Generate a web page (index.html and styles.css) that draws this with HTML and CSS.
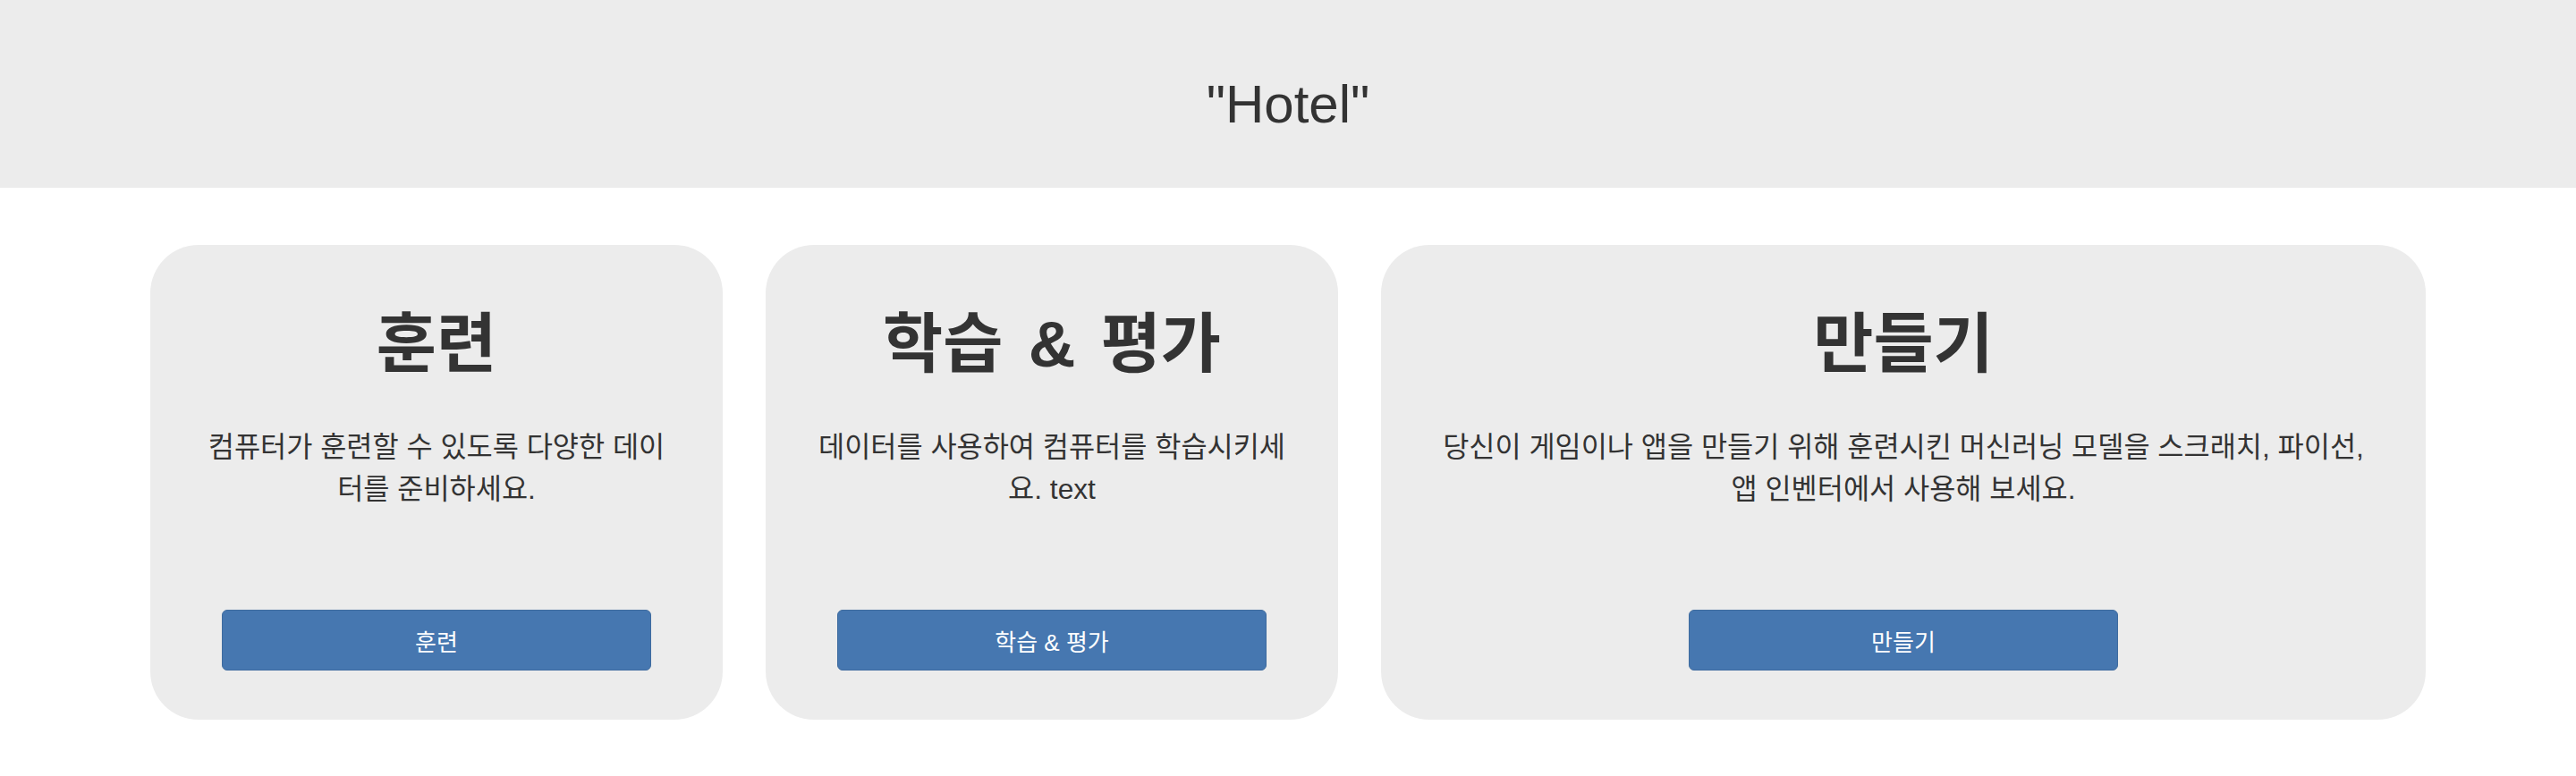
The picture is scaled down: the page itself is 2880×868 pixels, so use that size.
FILE: index.html
```html
<!DOCTYPE html>
<html lang="ko">
<head>
<meta charset="utf-8">
<title>Hotel</title>
<link rel="stylesheet" href="styles.css">
</head>
<body>
<header class="top">
  <h1 class="title">"Hotel"</h1>
</header>
<main class="cards">
  <section class="card">
    <h2 class="card-title">훈련</h2>
    <p class="card-text">컴퓨터가 훈련할 수 있도록 다양한 데이터를 준비하세요.</p>
    <button class="card-btn">훈련</button>
  </section>
  <section class="card">
    <h2 class="card-title">학습 &amp; 평가</h2>
    <p class="card-text">데이터를 사용하여 컴퓨터를 학습시키세요. text</p>
    <button class="card-btn">학습 &amp; 평가</button>
  </section>
  <section class="card">
    <h2 class="card-title">만들기</h2>
    <p class="card-text">당신이 게임이나 앱을 만들기 위해 훈련시킨 머신러닝 모델을 스크래치, 파이선, 앱 인벤터에서 사용해 보세요.</p>
    <button class="card-btn">만들기</button>
  </section>
</main>
</body>
</html>
```
FILE: styles.css
```css
* { box-sizing: border-box; }
html, body {
  margin: 0;
  padding: 0;
  background: #ffffff;
}
body {
  font-family: "Liberation Sans", Arial, "Noto Sans CJK KR", sans-serif;
  color: #333333;
}
.top {
  background: #ececec;
  height: 210px;
  padding-top: 81px;
}
.title {
  margin: 0;
  font-size: 60px;
  line-height: 72px;
  font-weight: normal;
  text-align: center;
  color: #333333;
}
.cards {
  display: grid;
  grid-template-columns: 640px 640px 1fr;
  gap: 48px;
  padding: 64px 168px 0;
}
.card {
  background: #ececec;
  border-radius: 54px;
  padding: 68px 52px 55px;
  display: flex;
  flex-direction: column;
  align-items: center;
  text-align: center;
}
.card-title {
  margin: 0;
  font-size: 73px;
  line-height: 86px;
  font-weight: bold;
  word-spacing: 8px;
  color: #333333;
}
.card-text {
  margin: 49px 0 0;
  font-size: 31.7px;
  line-height: 47px;
  color: #333333;
}
.card-btn {
  margin-top: 111px;
  width: 480px;
  height: 68px;
  background: #4677b0;
  border: 1px solid #3e6b9f;
  border-radius: 6px;
  color: #ffffff;
  font-family: inherit;
  font-size: 26px;
}
```
